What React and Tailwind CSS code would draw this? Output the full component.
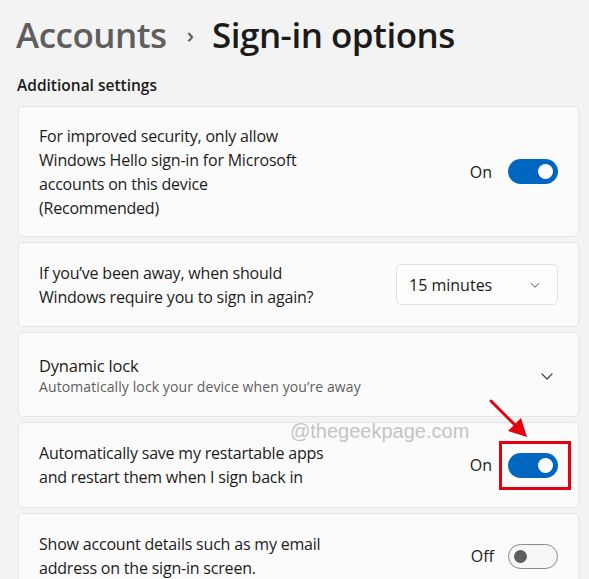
import React from "react";

const font = { fontFamily: '"Open Sans", "Noto Sans", sans-serif' };

function Toggle({ on }) {
  return on ? (
    <div className="w-[50px] h-[25px] rounded-full bg-[#0067c0] flex items-center justify-end pr-[5px]">
      <div className="w-[15px] h-[15px] rounded-full bg-white" />
    </div>
  ) : (
    <div className="w-[50px] h-[25px] rounded-full border border-[#8a8a8a] bg-[#f6f6f6] flex items-center pl-[5px]">
      <div className="w-[13px] h-[13px] rounded-full bg-[#5d5d5d]" />
    </div>
  );
}

function Chevron({ className }) {
  return (
    <svg className={className} viewBox="0 0 16 16" fill="none" stroke="#444" strokeWidth="1.2" strokeLinecap="round" strokeLinejoin="round">
      <path d="M3 6l5 5 5-5" />
    </svg>
  );
}

function Card({ children, className = "" }) {
  return (
    <div className={`bg-[#fbfbfb] border border-[#e5e5e5] rounded-[5px] flex items-center pl-5 pr-5 ${className}`}>
      {children}
    </div>
  );
}

export default function App() {
  return (
    <div className="w-[589px] h-[579px] overflow-hidden bg-[#f3f3f3] text-[#1b1b1b] relative" style={font}>
      <div className="flex items-baseline pl-[16px] pt-[9px] h-[65px]">
        <span className="text-[35px] font-semibold text-[#5e5e5e] tracking-[-0.5px]">Accounts</span>
        <span className="text-[22px] font-semibold text-[#5e5e5e] ml-[20px] mr-[18px] relative top-[-5px]">›</span>
        <span className="text-[35px] font-semibold text-[#1b1b1b] tracking-[-0.5px]">Sign-in options</span>
      </div>
      <div className="pl-[17px] pt-[9px] pb-[10px] text-[15.5px] font-semibold leading-[22px]">Additional settings</div>

      <div className="flex flex-col gap-[5px] pl-[18px] pr-[10px]">
        <Card className="h-[131px]">
          <div className="flex-1 text-[16px] leading-[24px] tracking-[-0.2px]">
            For improved security, only allow<br />
            Windows Hello sign-in for Microsoft<br />
            accounts on this device<br />
            (Recommended)
          </div>
          <span className="text-[16px] mr-[16px]">On</span>
          <Toggle on />
        </Card>

        <Card className="h-[85px]">
          <div className="flex-1 text-[16px] leading-[24px] tracking-[-0.2px]">
            If you’ve been away, when should<br />
            Windows require you to sign in again?
          </div>
          <div className="w-[162px] h-[41px] rounded-[5px] border border-[#e2e2e2] bg-[#fdfdfd] flex items-center pl-[12px] pr-[16px] justify-between">
            <span className="text-[16px]">15 minutes</span>
            <Chevron className="w-[12px] h-[12px]" />
          </div>
        </Card>

        <Card className="h-[85px] pt-[2px]">
          <div className="flex-1">
            <div className="text-[16.5px] leading-[22px] tracking-[-0.2px]">Dynamic lock</div>
            <div className="text-[14px] leading-[19px] text-[#5f5f5f] tracking-[0.1px]">Automatically lock your device when you’re away</div>
          </div>
          <Chevron className="w-[16px] h-[16px] mr-[3px]" />
        </Card>

        <Card className="h-[86px]">
          <div className="flex-1 text-[16px] leading-[24px] tracking-[-0.2px]">
            Automatically save my restartable apps<br />
            and restart them when I sign back in
          </div>
          <span className="text-[16px] mr-[16px]">On</span>
          <Toggle on />
        </Card>

        <Card className="h-[86px]">
          <div className="flex-1 text-[16px] leading-[24px] tracking-[-0.2px]">
            Show account details such as my email<br />
            address on the sign-in screen.
          </div>
          <span className="text-[16px] mr-[14px]">Off</span>
          <Toggle on={false} />
        </Card>
      </div>

      {/* watermark */}
      <div className="absolute left-[290px] top-[416px] text-[20px] text-[#c4c4c4]" style={{ fontFamily: '"Liberation Sans", sans-serif' }}>
        @thegeekpage.com
      </div>

      {/* red highlight box */}
      <div className="absolute left-[499px] top-[441px] w-[72px] h-[49px] border-[3px] border-[#e3000f]" />
      <svg className="absolute left-[486px] top-[396px]" width="50" height="48" viewBox="0 0 50 48">
        <line x1="5" y1="5" x2="31" y2="31" stroke="#e3000f" strokeWidth="3" strokeLinecap="round" />
        <polygon points="41,41 22,35 35,22" fill="#e3000f" />
      </svg>
    </div>
  );
}
